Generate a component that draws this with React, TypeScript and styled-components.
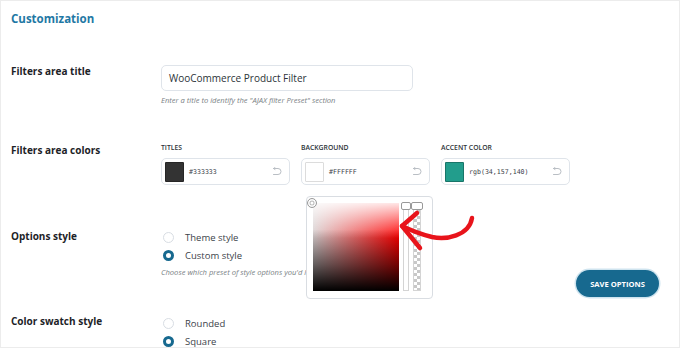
import React from "react";
import styled, { createGlobalStyle } from "styled-components";

const GlobalStyle = createGlobalStyle`
  html, body {
    margin: 0;
    padding: 0;
    background: #ffffff;
  }
  body {
    font-family: "Open Sans", "Noto Sans", sans-serif;
    color: #1d2327;
  }
`;

const Card = styled.div`
  position: relative;
  box-sizing: border-box;
  width: 680px;
  height: 348px;
  border: 1px solid #ececec;
  background: #fff;
  overflow: hidden;
  padding: 10px 0 0 10px;
`;

const Heading = styled.h2`
  margin: 0;
  font-size: 11.5px;
  line-height: 16px;
  font-weight: 700;
  color: #1f78a4;
`;

const Row = styled.div<{ $top: number }>`
  display: grid;
  grid-template-columns: 150px 1fr auto;
  margin-top: ${(p) => p.$top}px;
`;

const Label = styled.div`
  font-size: 10px;
  line-height: 14px;
  font-weight: 700;
  color: #1d2327;
`;

const Field = styled.div<{ $offset?: number }>`
  display: flex;
  flex-direction: column;
  margin-top: ${(p) => p.$offset ?? 0}px;
`;

const TextInput = styled.div`
  box-sizing: border-box;
  width: 252px;
  height: 26px;
  border: 1px solid #dfe4ea;
  border-radius: 5px;
  display: flex;
  align-items: center;
  padding-left: 7px;
  font-size: 10px;
  color: #2c3338;
`;

const Help = styled.div<{ $top: number }>`
  margin-top: ${(p) => p.$top}px;
  font-size: 7.6px;
  line-height: 12px;
  font-style: italic;
  color: #7a7f85;
  white-space: nowrap;
`;

const ColorGrid = styled.div`
  display: grid;
  grid-template-columns: repeat(3, 129px);
  column-gap: 11px;
`;

const ColorField = styled.div`
  display: flex;
  flex-direction: column;
`;

const SmallCaps = styled.div`
  font-size: 6.8px;
  line-height: 10px;
  font-weight: 600;
  color: #2c3338;
  text-transform: uppercase;
  margin-bottom: 5px;
`;

const ColorBox = styled.div`
  box-sizing: border-box;
  height: 27px;
  border: 1px solid #dfe4ea;
  border-radius: 5px;
  display: flex;
  align-items: center;
  padding: 0 7px 0 3px;
`;

const Swatch = styled.div<{ $color: string }>`
  box-sizing: border-box;
  width: 19px;
  height: 20px;
  border: 1px solid ${(p) => (p.$color === "#ffffff" ? "#dcdcdc" : "rgba(0,0,0,0.25)")};
  background: ${(p) => p.$color};
  border-radius: 1px;
`;

const ColorValue = styled.span`
  margin-left: 5px;
  font-family: "DejaVu Sans Mono", "Liberation Mono", monospace;
  font-size: 6.6px;
  color: #3c434a;
  flex: 1;
`;

const Options = styled.div`
  display: flex;
  flex-direction: column;
`;

const Option = styled.div`
  display: flex;
  align-items: center;
  height: 18px;
  padding-left: 2px;
  font-size: 9.5px;
  color: #3c434a;
`;

const Radio = styled.span<{ $checked?: boolean }>`
  box-sizing: border-box;
  width: 11px;
  height: 11px;
  border-radius: 50%;
  margin-right: 11px;
  border: ${(p) => (p.$checked ? "3px solid #17698f" : "1px solid #d8dde3")};
  background: #fff;
`;

const SaveButton = styled.button`
  align-self: start;
  margin: 42px 20px 0 0;
  width: 83px;
  height: 27px;
  border: none;
  border-radius: 14px;
  background: #17698f;
  color: #fff;
  font-family: "Open Sans", "Noto Sans", sans-serif;
  font-size: 7.6px;
  font-weight: 700;
  box-shadow: 0 0 0 1.5px #cfe4ef;
`;

const Picker = styled.div`
  position: absolute;
  left: 305px;
  top: 195px;
  box-sizing: border-box;
  width: 127px;
  height: 103px;
  border: 1px solid #d9dde2;
  border-radius: 4px;
  background: #fff;
  display: flex;
  gap: 4px;
  padding: 6px 0 0 6px;
`;

const Saturation = styled.div`
  position: relative;
  width: 86px;
  height: 88px;
  background: linear-gradient(to bottom, rgba(0, 0, 0, 0) 30%, rgba(0, 0, 0, 0.55) 70%, #000 100%),
    linear-gradient(to bottom, rgba(255, 255, 255, 0.9) 0%, rgba(255, 255, 255, 0) 40%),
    linear-gradient(to right, #d8d0d0 0%, #ff0000 100%);
`;

const Handle = styled.span`
  position: absolute;
  left: -6px;
  top: -5px;
  box-sizing: border-box;
  width: 10px;
  height: 10px;
  border-radius: 50%;
  border: 1px solid #9a9a9a;
  box-shadow: inset 0 0 0 1.5px #fff, inset 0 0 0 2.5px #bbb;
  background: transparent;
`;

const Slider = styled.div<{ $checker?: boolean }>`
  position: relative;
  box-sizing: border-box;
  width: ${(p) => (p.$checker ? 8 : 6)}px;
  height: 88px;
  border: 1px solid #d4d4d4;
  background: ${(p) =>
    p.$checker
      ? "repeating-conic-gradient(#c8c8c8 0% 25%, #fff 0% 50%) 0 0 / 6px 6px"
      : "#fff"};
`;

const SliderKnob = styled.span`
  position: absolute;
  left: -3px;
  right: -3px;
  top: -2px;
  height: 6px;
  border: 1px solid #999;
  border-radius: 2px;
  background: #fff;
`;

const Arrow = styled.svg`
  position: absolute;
  left: 395px;
  top: 205px;
  overflow: visible;
`;

const UndoIcon = () => (
  <svg width="10" height="9" viewBox="0 0 10 9" fill="none" stroke="#b9bec4" strokeWidth="1" strokeLinecap="round">
    <path d="M1.5 1.5 H6 A3 3 0 0 1 6 7.5 H1.5" />
    <path d="M1.5 1.5 L3 0.5 M1.5 1.5 L3 2.5" />
  </svg>
);

const colors = [
  { label: "Titles", color: "#333333", value: "#333333" },
  { label: "Background", color: "#ffffff", value: "#FFFFFF" },
  { label: "Accent color", color: "#229d8c", value: "rgb(34,157,140)" },
];

export default function App() {
  return (
    <>
      <GlobalStyle />
      <Card>
        <Heading>Customization</Heading>

        <Row $top={37}>
          <Label>Filters area title</Label>
          <Field $offset={1}>
            <TextInput>WooCommerce Product Filter</TextInput>
            <Help $top={3}>Enter a title to identify the "AJAX filter Preset" section</Help>
          </Field>
        </Row>

        <Row $top={37}>
          <Label>Filters area colors</Label>
          <ColorGrid>
            {colors.map((c) => (
              <ColorField key={c.label}>
                <SmallCaps>{c.label}</SmallCaps>
                <ColorBox>
                  <Swatch $color={c.color} />
                  <ColorValue>{c.value}</ColorValue>
                  <UndoIcon />
                </ColorBox>
              </ColorField>
            ))}
          </ColorGrid>
        </Row>

        <Row $top={43}>
          <Label style={{ marginTop: 1 }}>Options style</Label>
          <Options>
            <Option>
              <Radio />
              Theme style
            </Option>
            <Option>
              <Radio $checked />
              Custom style
            </Option>
            <Help $top={2}>Choose which preset of style options you'd like to use</Help>
          </Options>
          <SaveButton>SAVE OPTIONS</SaveButton>
        </Row>

        <Row $top={17}>
          <Label>Color swatch style</Label>
          <Options>
            <Option>
              <Radio />
              Rounded
            </Option>
            <Option>
              <Radio $checked />
              Square
            </Option>
          </Options>
        </Row>

        <Picker>
          <Saturation>
            <Handle />
          </Saturation>
          <Slider>
            <SliderKnob />
          </Slider>
          <Slider $checker>
            <SliderKnob />
          </Slider>
        </Picker>

        <Arrow width="80" height="50" viewBox="0 0 80 50">
          <path
            d="M76 12 C73 30 50 34 36 31 C24 28 14 24 6 20"
            fill="none"
            stroke="#e8141b"
            strokeWidth="4.5"
            strokeLinecap="round"
          />
          <path
            d="M21 7 L6 20 L24 42"
            fill="none"
            stroke="#e8141b"
            strokeWidth="4.5"
            strokeLinecap="round"
            strokeLinejoin="round"
          />
        </Arrow>
      </Card>
    </>
  );
}
